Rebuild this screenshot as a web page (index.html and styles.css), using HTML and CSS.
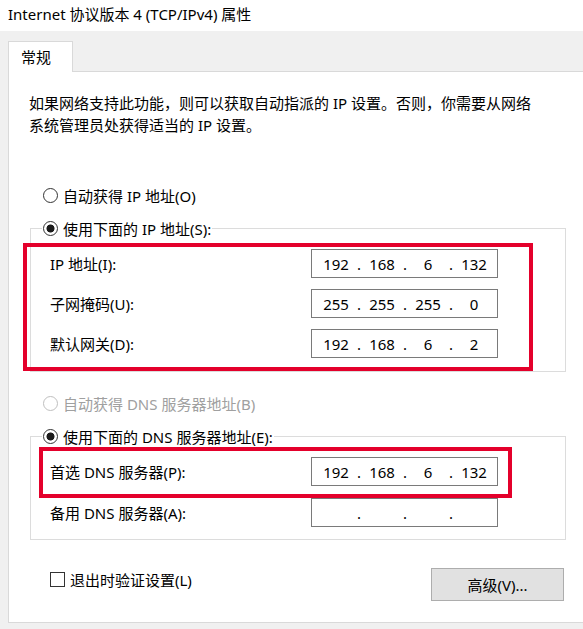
FILE: index.html
```html
<!DOCTYPE html>
<html lang="zh-CN">
<head>
    <meta charset="UTF-8">
    <meta name="viewport" content="width=device-width, initial-scale=1.0">
    <title>Internet 协议版本 4 (TCP/IPv4) 属性</title>
    <link rel="stylesheet" href="styles.css">
</head>
<body>
    <div class="titlebar">Internet 协议版本 4 (TCP/IPv4) 属性</div>
    <div class="tabstrip">
        <div class="tab">常规</div>
    </div>
    <div class="panel">
        <p class="intro">如果网络支持此功能，则可以获取自动指派的 IP 设置。否则，你需要从网络<br>系统管理员处获得适当的 IP 设置。</p>

        <label class="option first"><input type="radio" name="ip"><span>自动获得 IP 地址(O)</span></label>
        <fieldset class="group">
            <legend><label class="option"><input type="radio" name="ip" checked><span>使用下面的 IP 地址(S):</span></label></legend>
            <div class="mark mark-ip">
                <div class="row">
                    <span>IP 地址(I):</span>
                    <div class="ipbox"><span class="oct">192</span><span class="dot">.</span><span class="oct">168</span><span class="dot">.</span><span class="oct">6</span><span class="dot">.</span><span class="oct">132</span></div>
                </div>
                <div class="row">
                    <span>子网掩码(U):</span>
                    <div class="ipbox"><span class="oct">255</span><span class="dot">.</span><span class="oct">255</span><span class="dot">.</span><span class="oct">255</span><span class="dot">.</span><span class="oct">0</span></div>
                </div>
                <div class="row">
                    <span>默认网关(D):</span>
                    <div class="ipbox"><span class="oct">192</span><span class="dot">.</span><span class="oct">168</span><span class="dot">.</span><span class="oct">6</span><span class="dot">.</span><span class="oct">2</span></div>
                </div>
            </div>
        </fieldset>

        <label class="option disabled second"><input type="radio" name="dns" disabled><span>自动获得 DNS 服务器地址(B)</span></label>
        <fieldset class="group">
            <legend><label class="option"><input type="radio" name="dns" checked><span>使用下面的 DNS 服务器地址(E):</span></label></legend>
            <div class="mark mark-dns">
                <div class="row">
                    <span>首选 DNS 服务器(P):</span>
                    <div class="ipbox"><span class="oct">192</span><span class="dot">.</span><span class="oct">168</span><span class="dot">.</span><span class="oct">6</span><span class="dot">.</span><span class="oct">132</span></div>
                </div>
            </div>
            <div class="row row-alt">
                <span>备用 DNS 服务器(A):</span>
                <div class="ipbox"><span class="oct"></span><span class="dot">.</span><span class="oct"></span><span class="dot">.</span><span class="oct"></span><span class="dot">.</span><span class="oct"></span></div>
            </div>
        </fieldset>

        <div class="footer">
            <label class="check"><input type="checkbox"><span>退出时验证设置(L)</span></label>
            <button type="button" class="btn">高级(V)...</button>
        </div>
    </div>
</body>
</html>
```

FILE: styles.css
```css
body {
    margin: 0;
    background-color: #f0f0f0;
    font-family: "Noto Sans", "Noto Sans CJK SC", sans-serif;
    font-size: 15px;
    color: #000;
    overflow: hidden;
}
.titlebar {
    height: 31px;
    line-height: 28px;
    padding-left: 8px;
    background: #fff;
    white-space: nowrap;
}
.tabstrip {
    height: 40px;
    padding: 10px 0 0 8px;
    box-sizing: border-box;
}
.tab {
    position: relative;
    width: 65px;
    height: 31px;
    box-sizing: border-box;
    padding-left: 12px;
    line-height: 30px;
    background: #fff;
    border: 1px solid #d9d9d9;
    border-bottom: none;
}
.panel {
    margin-left: 8px;
    padding: 20px 0 21px 0;
    background: #fff;
    border: 1px solid #d9d9d9;
    border-right: none;
}
.intro {
    margin: 0;
    padding-left: 20px;
    line-height: 22px;
    white-space: nowrap;
}

/* radio rows */
.option {
    display: flex;
    align-items: center;
    height: 24px;
    white-space: nowrap;
}
.option.first {
    margin: 47px 0 0 34px;
}
.option.second {
    margin: 19px 0 0 34px;
}
.option span {
    margin-left: 5px;
}
.option input {
    appearance: none;
    width: 15px;
    height: 15px;
    margin: 0;
    border: 1px solid #333;
    border-radius: 50%;
    background: #fff;
}
.option input:checked {
    background: radial-gradient(circle, #1a1a1a 0 3.6px, #fff 4.4px);
}
.option.disabled {
    color: #a0a0a0;
}
.option.disabled input {
    border-color: #bfbfbf;
}

/* group boxes */
.group {
    margin: 9px 0 0 21px;
    padding: 0;
    width: 536px;
    box-sizing: border-box;
    border: 1px solid #dcdcdc;
}
.group legend {
    margin-left: 11px;
    padding: 0 1px 0 1px;
}
.mark {
    border: 4px solid #e4002b;
    box-sizing: border-box;
}
.mark-ip {
    margin: 3px 0 0 -8px;
    width: 510px;
    padding: 2px 0 9px 23px;
    display: flex;
    flex-direction: column;
    gap: 11px;
}
.mark-dns {
    margin: -1px 0 0 8px;
    width: 473px;
    padding: 6px 0 8px 7px;
}
.row {
    display: grid;
    grid-template-columns: 261px 187px;
    align-items: center;
    white-space: nowrap;
}
.row-alt {
    padding: 0 0 12px 19px;
}
.ipbox {
    display: flex;
    align-items: center;
    height: 29px;
    padding-left: 8px;
    box-sizing: border-box;
    border: 1px solid #7a7a7a;
    background: #fff;
}
.oct {
    width: 32px;
    text-align: center;
}
.dot {
    width: 14px;
    text-align: center;
}

/* bottom row */
.footer {
    display: flex;
    justify-content: space-between;
    align-items: flex-start;
    margin-top: 28px;
    padding: 0 19px 0 41px;
}
.check {
    display: flex;
    align-items: center;
    height: 16px;
    margin-top: 3px;
    white-space: nowrap;
}
.check input {
    appearance: none;
    width: 15px;
    height: 15px;
    margin: 0 5px 0 0;
    border: 1px solid #333;
    background: #fff;
}
.btn {
    width: 133px;
    height: 33px;
    font: inherit;
    color: #000;
    background: #e1e1e1;
    border: 1px solid #adadad;
    padding: 0;
}
```
